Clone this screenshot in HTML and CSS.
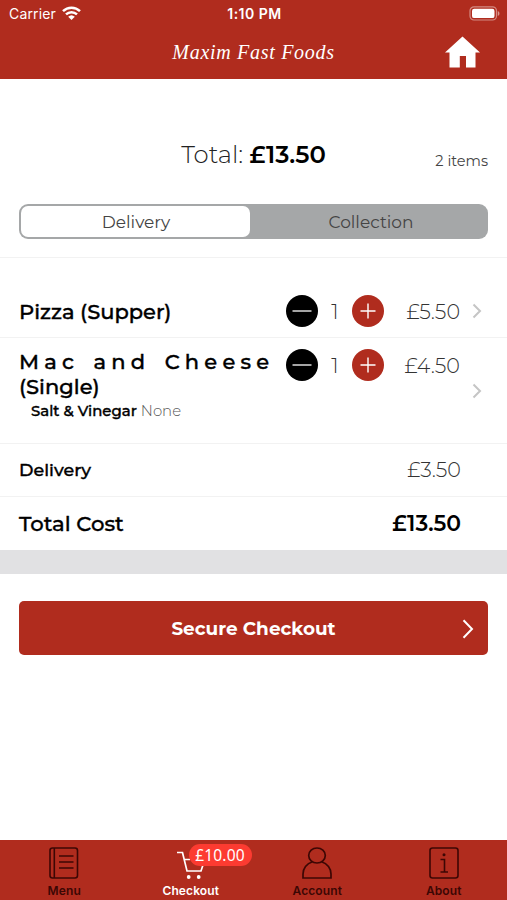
FILE: index.html
```html
<!DOCTYPE html>
<html lang="en">
<head>
<meta charset="utf-8">
<meta name="viewport" content="width=device-width, initial-scale=1">
<title>Checkout</title>
<link rel="stylesheet" href="styles.css">
</head>
<body>
<div class="app">
  <header class="header">
    <div class="status">
      <div class="carrier"><span>Carrier</span>
        <svg width="19" height="14" viewBox="0 0 19 14" fill="none" stroke="#fff" stroke-width="2.5"><path d="M1 5.2a12.2 12.2 0 0 1 17 0M4 8.4a8 8 0 0 1 11 0"/><path d="M9.5 14 6.2 10.7a4.8 4.8 0 0 1 6.6 0Z" fill="#fff" stroke="none"/></svg>
      </div>
      <div class="clock">1:10 PM</div>
      <svg class="battery" width="31" height="15" viewBox="0 0 31 15"><rect x="1" y=".8" width="26.5" height="13.2" rx="4" fill="none" stroke="#fff" stroke-opacity=".45" stroke-width="1.2"/><rect x="3" y="2.7" width="22.5" height="9.4" rx="2.2" fill="#fff"/><path d="M28.8 5v5c2.2-1 2.2-4 0-5Z" fill="#fff" fill-opacity=".5"/></svg>
    </div>
    <div class="brandbar">
      <h1 class="brand">Maxim Fast Foods</h1>
      <svg class="home" width="35" height="32" viewBox="0 0 35 32"><path d="M17.5.5 35 16.5H30.5V31.5H21V20H14.8V31.5H4.5V16.5H0Z" fill="#fff"/></svg>
    </div>
  </header>
  <main class="main">
    <section class="summary">
      <p class="total"><span class="total-label">Total:</span> <b class="total-value">£13.50</b></p>
      <p class="count">2 items</p>
    </section>
    <div class="segments"><div class="segment selected"><span>Delivery</span></div><div class="segment"><span class="collection">Collection</span></div></div>
    <ul class="basket">
      <li class="item first">
        <div class="name"><span class="pizza">Pizza (Supper)</span></div>
        <div class="stepper">
          <svg width="32" height="32" viewBox="0 0 32 32"><circle cx="16" cy="16" r="16"/><path d="M6.5 16h19" stroke="#fff" stroke-width="1.3"/></svg>
          <span class="qty">1</span>
          <svg width="32" height="32" viewBox="0 0 32 32"><circle cx="16" cy="16" r="16" fill="#b02c1e"/><path d="M8.5 16h15M16 8.5v15" stroke="#fff" stroke-width="1.4"/></svg>
        </div>
        <span class="price">£5.50</span>
        <svg class="chevron" width="10" height="16" viewBox="0 0 10 16"><path d="M1.5 1.5 8 8l-6.5 6.5" fill="none" stroke="#c5c5c5" stroke-width="2"/></svg>
      </li>
      <li class="item second">
        <div class="name"><span class="mac">Mac and Cheese</span><span class="single">(Single)</span>
          <p class="option"><b>Salt &amp; Vinegar</b> <span>None</span></p>
        </div>
        <div class="stepper">
          <svg width="32" height="32" viewBox="0 0 32 32"><circle cx="16" cy="16" r="16"/><path d="M6.5 16h19" stroke="#fff" stroke-width="1.3"/></svg>
          <span class="qty">1</span>
          <svg width="32" height="32" viewBox="0 0 32 32"><circle cx="16" cy="16" r="16" fill="#b02c1e"/><path d="M8.5 16h15M16 8.5v15" stroke="#fff" stroke-width="1.4"/></svg>
        </div>
        <span class="price">£4.50</span>
        <svg class="chevron" width="10" height="16" viewBox="0 0 10 16"><path d="M1.5 1.5 8 8l-6.5 6.5" fill="none" stroke="#c5c5c5" stroke-width="2"/></svg>
      </li>
      <li class="line"><span class="line-label">Delivery</span><span class="line-price">£3.50</span></li>
      <li class="line grand"><span class="line-label">Total Cost</span><span class="line-price">£13.50</span></li>
    </ul>
    <div class="band"></div>
    <button class="checkout"><span>Secure Checkout</span><svg width="12" height="20" viewBox="0 0 12 20"><path d="m1.5 1.3 8.5 8.7-8.5 8.7" fill="none" stroke="#fff" stroke-width="2"/></svg></button>
  </main>
  <nav class="tabs">
    <a class="tab"><svg width="30" height="32" viewBox="0 0 30 32" fill="none" stroke="#3c0704" stroke-width="1.6"><rect x="1" y="1" width="27.5" height="30" rx="2.5"/><path d="M5.3 1v30M10 9h14.5M10 15h14.5M10 21h14.5"/></svg><span class="tab-menu">Menu</span></a>
    <a class="tab active"><svg width="30" height="32" viewBox="0 0 30 32" fill="none" stroke="#fff" stroke-width="1.7"><path d="M1 5.5h5.5l4.5 18.5h14L28 15M8 12.5h6"/><circle cx="12.700" cy="30" r="1.900" fill="#fff" stroke="none"/><circle cx="22.700" cy="30" r="1.900" fill="#fff" stroke="none"/></svg><span class="tab-checkout">Checkout</span><b class="badge">£10.00</b></a>
    <a class="tab"><svg width="30" height="32" viewBox="0 0 30 32" fill="none" stroke="#3c0704" stroke-width="1.7"><ellipse cx="15" cy="8.5" rx="8.3" ry="7.5"/><path d="M10.5 14.8C4.500 16.500 1 21.500 1 27v4h28v-4c0-5.500-3.500-10.500-9.500-12.200"/></svg><span class="tab-account">Account</span></a>
    <a class="tab"><svg width="30" height="32" viewBox="0 0 30 32" fill="none" stroke="#3c0704" stroke-width="1.6"><rect x="1" y="1" width="28" height="30" rx="2.5"/><path d="M11.5 12.500h4V25M11.500 25h7.500"/><circle cx="15" cy="7.800" r="1.500" fill="#3c0704" stroke="none"/></svg><span class="tab-about">About</span></a>
  </nav>
</div>
</body>
</html>
```
FILE: styles.css
```css
* { box-sizing: border-box; margin: 0; padding: 0; }
body { font-family: Montserrat, Inter, sans-serif; color: #000; background: #fff; }
svg { display: block; flex: none; }
span, b, p { white-space: nowrap; }
.app { width: 507px; height: 900px; display: flex; flex-direction: column; overflow: hidden; }
.header { height: 79px; background: #b02c1e; color: #fff; }
.status { height: 28px; padding: 0 7px 0 9px; display: grid; grid-template-columns: 1fr auto 1fr; align-items: center; font: 500 14px/28px Inter, sans-serif; }
.carrier { display: flex; align-items: center; gap: 6px; font-weight: 400; letter-spacing: .15px; }
.carrier svg { margin-top: -2px; }
.battery { margin-top: -2px; }
.clock { font-weight: 600; font-size: 14px; letter-spacing: .5px; }
.battery { justify-self: end; }
.brandbar { height: 51px; display: grid; grid-template-columns: 1fr auto 1fr; padding: 0 27px; }
.brand { grid-column: 2; font: italic 400 20px/49px "Brush Script MT", "Liberation Serif", cursive; letter-spacing: .7px; }
.home { justify-self: end; margin-top: 8px; }
.main { flex: 1; }
.summary { height: 125px; padding: 0 19px; display: grid; grid-template-columns: 1fr auto 1fr; align-items: start; }
.total { grid-column: 2; margin-top: 59px; font-size: 24.3px; line-height: 32px; }
.total-label { font-weight: 300; color: #222; }
.total-value { font-weight: 600; }
.count { justify-self: end; margin-top: 72px; font-size: 14.5px; line-height: 20px; color: #444; }
.segments { height: 35px; margin: 0 19px 18px; padding: 2px; border-radius: 9px; background: #a5a7a8; display: flex; }
.segment { flex: 1; padding-left: 6px; border-radius: 7px; display: flex; align-items: center; justify-content: center; font-size: 17px; color: #444; }
.selected { flex: 0 0 229px; padding: 0 0 0 1px; background: #fff; }
.basket { list-style: none; border-top: 1px solid #f2f2f2; }
.item { display: flex; padding-left: 19px; border-bottom: 1px solid #f2f2f2; font-size: 21px; line-height: 25px; }
.first { height: 80px; padding-top: 37px; }
.second { height: 106px; padding-top: 11px; }
.name { width: 267px; font-weight: 500; display: flex; flex-direction: column; align-items: flex-start; -webkit-text-stroke: .4px #000; }
.first .name { padding-top: 4px; }
.mac { letter-spacing: 5.2px; word-spacing: 3.5px; }
.option { margin-left: 12px; font-size: 14.9px; line-height: 25px; }
.option b { font-weight: 500; }
.option span { font-weight: 300; color: #555; -webkit-text-stroke: 0; }
.stepper { width: 98px; display: flex; justify-content: space-between; align-items: flex-start; }
.qty, .price, .line-price { font-weight: 300; color: #333; }
.qty, .price { line-height: 33px; font-size: 20.7px; }
.price { width: 76px; text-align: right; }
.chevron { margin: 8px 0 0 12px; }
.second .chevron { margin-top: 34px; }
.line { height: 53px; display: flex; justify-content: space-between; align-items: center; padding: 0 46px 2px 19px; border-bottom: 1px solid #f2f2f2; }
.line-label { font-weight: 500; font-size: 17.5px; -webkit-text-stroke: .35px #000; }
.line-price { font-size: 20.7px; }
.grand { border: 0; }
.grand .line-label { font-size: 21.2px; }
.grand .line-price { color: #000; font-weight: 600; font-size: 21.9px; }
.band { height: 24px; background: #e1e1e3; }
.checkout { width: 469px; height: 54px; margin: 27px 19px 0; padding: 1px 14px 0; display: grid; grid-template-columns: 1fr auto 1fr; align-items: center; border: 0; border-radius: 5px; background: #b02c1e; color: #fff; font: 700 18.4px/24px Montserrat, Inter, sans-serif; }
.checkout span { grid-column: 2; }
.checkout svg { justify-self: end; }
.tabs { height: 60px; padding-left: 1px; background: #b02c1e; display: flex; }
.tab { width: 126.5px; padding-top: 7px; position: relative; display: flex; flex-direction: column; align-items: center; color: #3c0704; font: 600 12px/14px Inter, sans-serif; gap: 5px; letter-spacing: .1px; }
.active { color: #fff; }
.badge { position: absolute; left: 61px; top: 4px; width: 63px; height: 22px; border-radius: 11px; background: #fc3b31; font: 400 15.6px/22px "Noto Sans", sans-serif; text-align: center; }
```
